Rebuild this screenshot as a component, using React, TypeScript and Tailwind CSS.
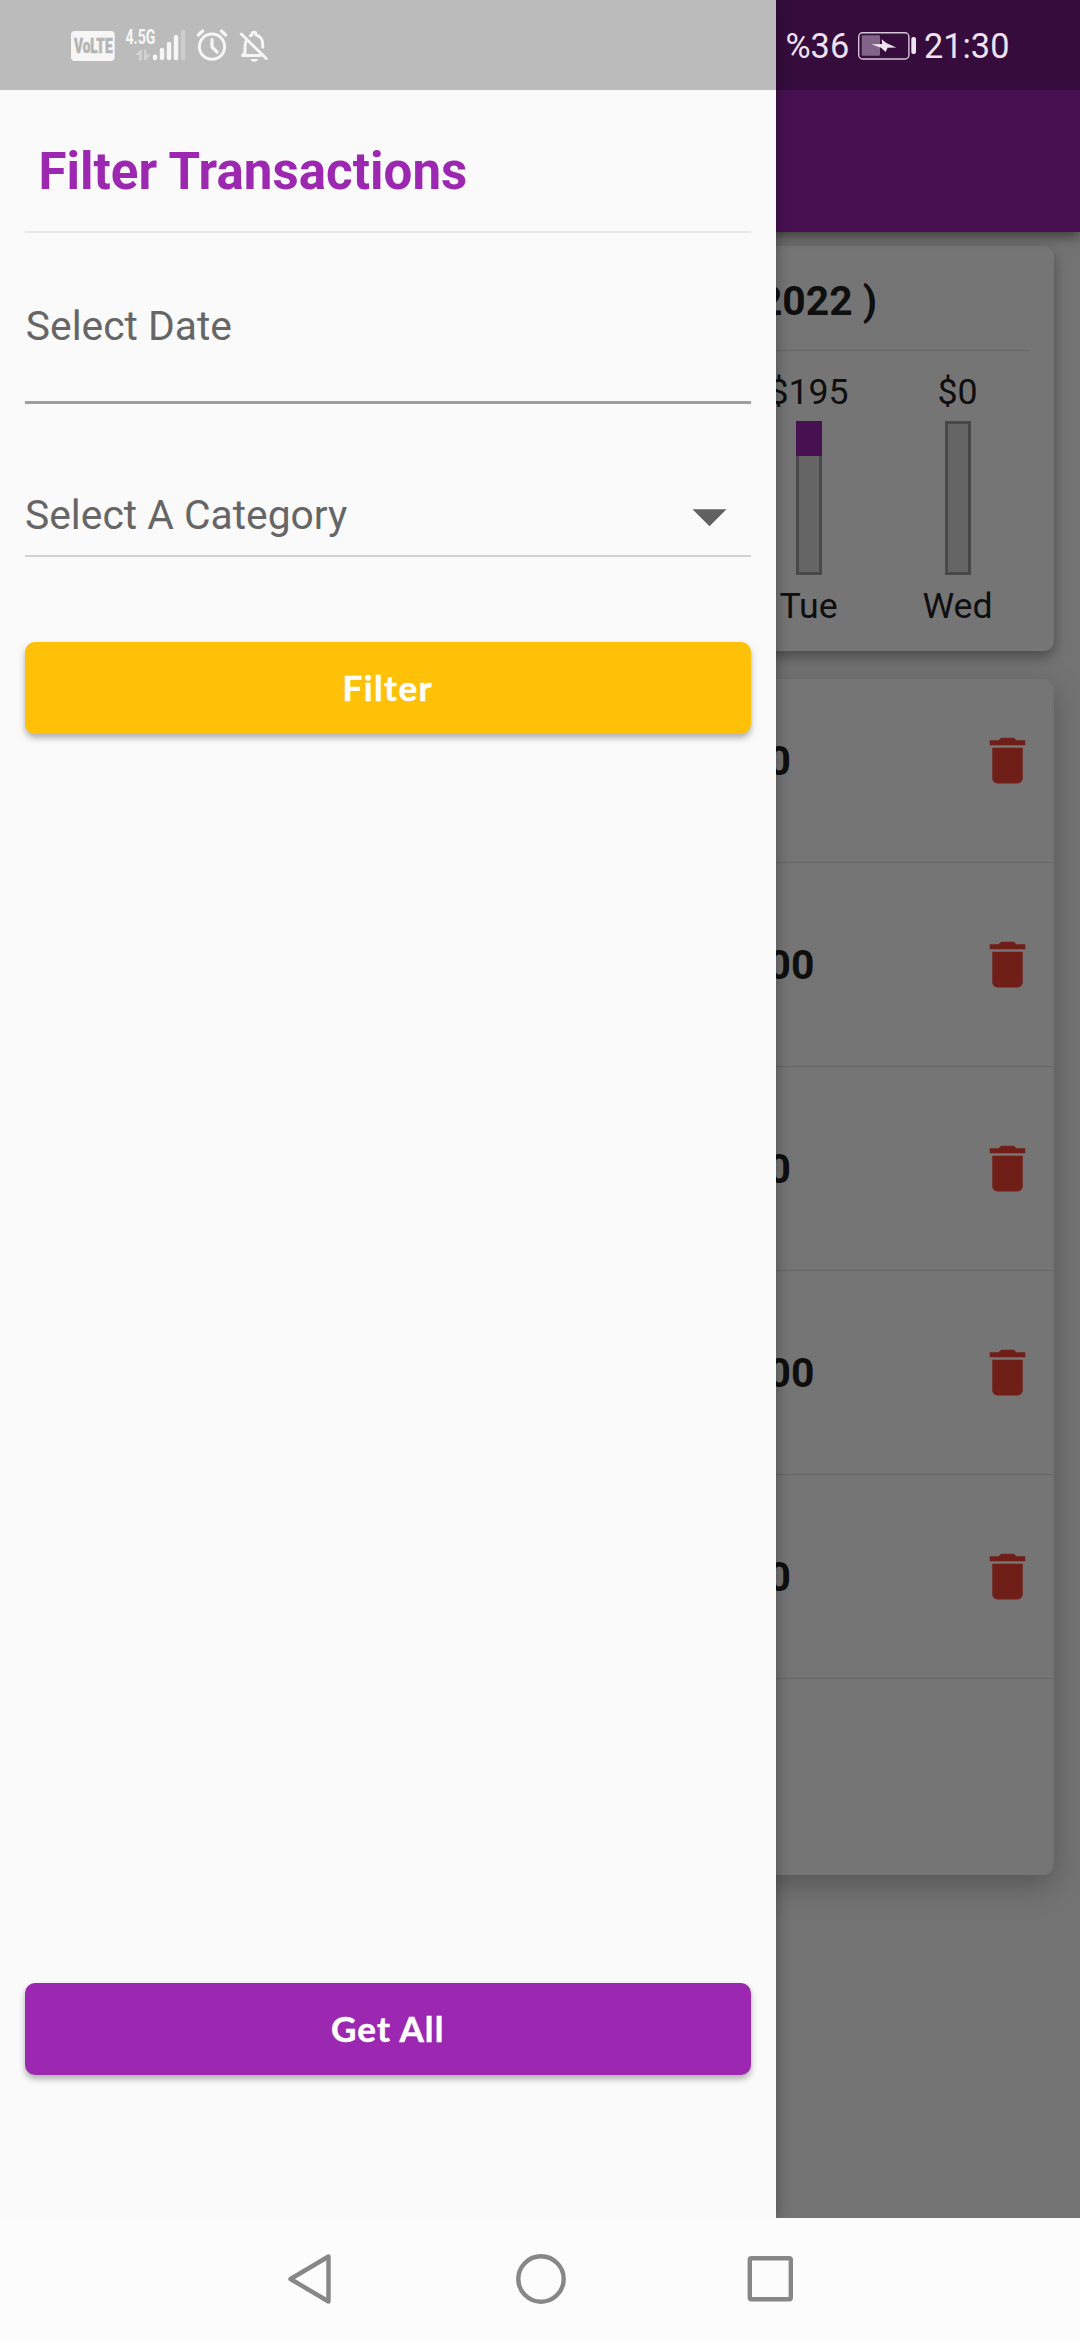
const days = [
  { label: "Tue", amount: "$195", ratio: 0.23 },
  { label: "Wed", amount: "$0", ratio: 0 },
];

const transactions = ["0", "00", "0", "00", "0"];

function TrashIcon() {
  return (
    <svg viewBox="0 0 24 24" className="size-[61px] shrink-0 fill-[#f44336]">
      <path d="M6 19c0 1.1.9 2 2 2h8c1.1 0 2-.9 2-2V7H6v12zM19 4h-3.5l-1-1h-5l-1 1H5v2h14V4z" />
    </svg>
  );
}

function StatusIcons() {
  return (
    <svg viewBox="71 25 170 42" className="h-[42px] w-[170px]" fill="none">
      <rect x="71" y="31" width="43.7" height="30" rx="4" fill="#f6f6f6" />
      <text x="74" y="52.6" textLength="38.500" lengthAdjust="spacingAndGlyphs" fontFamily="Roboto, sans-serif" fontWeight="900" fontSize="20" fill="#b4b4b4" stroke="#b4b4b4" strokeWidth="0.500">VoLTE</text>
      <text x="125.5" y="43.5" textLength="30" lengthAdjust="spacingAndGlyphs" fontFamily="Roboto, sans-serif" fontWeight="700" fontSize="19.5" fill="#f6f6f6">4.5G</text>
      <g stroke="#f6f6f6" strokeWidth="4.4" strokeLinecap="round">
        <path d="M155 56.7v1.4M162 50v8.1M169 44v14.1M176 37.2v20.9" />
        <path d="M183.200 32v26.100" stroke="#cdcdcd" />
      </g>
      <path d="M135.500 55l5-5.200h1.500v10.400h-3v-5.200zM150.500 54.500l-4.500 5.700h-2v-10.400h2.500v4.700z" fill="#d2d2d2" />
      <g stroke="#f6f6f6" strokeLinecap="round" strokeLinejoin="round">
        <circle cx="212" cy="46.700" r="12.600" strokeWidth="3" />
        <path d="M212 39.500v7.500l5 5" strokeWidth="3.200" />
        <path d="M198.300 35l4.400-4M221.300 31l4.400 4" strokeWidth="3.200" />
      </g>
    </svg>
  );
}

function BellOffIcon() {
  return (
    <svg viewBox="238 27 32 36" className="h-[36px] w-[32px]" fill="none" stroke="#f6f6f6" strokeWidth="2.900" strokeLinecap="round" strokeLinejoin="round">
      <path d="M246 40.500c-.8 2-1 3.500-1 5.500v5.500l-2.300 3h18" />
      <path d="M250.300 34.700c.6-.4 1-.6 1.700-.9 0-3.600 4-3.600 4 0 4.600 1.400 6.700 5 6.700 9.200v3.200" />
      <path d="M241.300 33l25 24.500" />
      <path d="M250.800 58h7a3.500 2.700 0 0 1-7 0z" fill="#f6f6f6" stroke="none" />
    </svg>
  );
}

function BatteryIcon() {
  return (
    <svg viewBox="857 31 60 30" className="h-[30px] w-[60px] shrink-0" fill="none">
      <rect x="858.700" y="32.700" width="50.200" height="26.300" rx="4" stroke="#d5c6d8" strokeWidth="1.400" />
      <rect x="861.700" y="35.300" width="18.300" height="20.500" rx="1" fill="#816487" />
      <path d="M871.300 44.300l10.900-.3-.6-4.700 4.700 3.600 10 4.600-8.700.3-2 4.200-4.600-4.200z" fill="#efe3f1" />
      <rect x="911.300" y="37" width="4.700" height="17" rx="2" fill="#efe3f1" />
    </svg>
  );
}

function StatusBar() {
  return (
    <div className="absolute inset-x-0 top-0 flex h-[90px] items-center bg-black/25 pt-[2px]">
      <div className="ml-[71px] flex w-[714.500px] items-center">
        <StatusIcons />
        <div className="-ml-[3px]"><BellOffIcon /></div>
      </div>
      <div className="flex items-center text-[34.300px] leading-none text-[#efe3f1]">
        <span className="w-[71.500px] pt-px">%36</span>
        <BatteryIcon />
        <span className="ml-[7px] pt-px">21:30</span>
      </div>
    </div>
  );
}

function DayColumn({ label, amount, ratio }: { label: string; amount: string; ratio: number }) {
  return (
    <div className="flex w-[149px] flex-col items-center text-[35.700px] leading-[42px] text-[#212121]">
      <span>{amount}</span>
      <div className="mt-[8px] h-[154px] w-[26px] border-[3px] border-[#9e9e9e] bg-[#dcdcdc]">
        {ratio > 0 && <div className="-mx-[3px] -mt-[3px] bg-[#9c27b0]" style={{ height: 154 * ratio }} />}
      </div>
      <span className="mt-[10px]">{label}</span>
    </div>
  );
}

function Backdrop() {
  return (
    <div className="flex h-full flex-col bg-[#fafafa]">
      <div className="relative h-[232px] shrink-0 bg-[#9c27b0] shadow-[0_5px_12px_rgba(0,0,0,0.45)]" />
      <section className="mx-[26px] mt-[14px] h-[405px] shrink-0 rounded-[10px] bg-white px-[25px] shadow-[0_6px_14px_rgba(0,0,0,0.35)]">
        <div className="flex h-[105px] items-center justify-end border-b border-[#dfdfdf] pt-[6px] pr-[152px] text-[40.800px] font-bold leading-none text-[#212121]">
          2022 )
        </div>
        <div className="-mr-[3px] flex justify-end pt-[20px]">
          {days.map((d) => <DayColumn key={d.label} {...d} />)}
        </div>
      </section>
      <section className="mx-[26px] mt-[28px] h-[1196px] shrink-0 overflow-hidden rounded-[11px] border-r-2 border-[#f8f8f8] bg-white shadow-[0_10px_30px_rgba(0,0,0,0.25)]">
        {transactions.map((amount, i) => (
          <div key={i} className="flex h-[204px] items-center justify-between border-b border-[#dfdfdf] pr-[14px] pl-[741.500px] first:h-[184px] first:pb-[20px]">
            <span className="pt-px text-[40.800px] font-bold leading-none text-[#212121]">{amount}</span>
            <TrashIcon />
          </div>
        ))}
      </section>
    </div>
  );
}

function Drawer() {
  return (
    <aside className="absolute inset-y-0 left-0 flex w-[775.500px] flex-col bg-[#fafafa] px-[25px] pt-[90px] shadow-[0_0_14px_rgba(0,0,0,0.35)]">
      <h1 className="flex h-[143px] items-center border-b-2 border-[#e8e8e8] pt-[21px] pl-[13.400px] text-[51px] font-bold leading-none tracking-[0.060px] text-[#9c27b0]">Filter Transactions</h1>
      <div className="flex h-[171px] items-center border-b-[3px] border-[#9e9e9e] pt-[18px] pl-[0.800px] text-[40.800px] leading-none text-[#666666]">Select Date</div>
      <div className="flex h-[153px] items-center justify-between border-b-2 border-[#d2d2d2] pt-[71px] pr-[10.500px] text-[40.800px] leading-none text-[#666666]">
        <span>Select A Category</span>
        <svg viewBox="0 0 24 24" className="size-[61px] fill-[#616161]"><path d="M5.300 9.500l6.700 6.700 6.700-6.700z" /></svg>
      </div>
      <button className="mt-[85px] h-[92px] rounded-[10px] bg-[#ffc107] pb-[2px] font-[Lato,sans-serif] text-[35px] font-bold tracking-[1.400px] text-white shadow-[0_4px_6px_rgba(0,0,0,0.3)] [-webkit-text-stroke:0.5px_white]">Filter</button>
      <button className="mt-auto mb-[143px] h-[92px] rounded-[10px] bg-[#9c27b0] pb-[2px] font-[Lato,sans-serif] text-[35px] font-bold tracking-[1.100px] text-white shadow-[0_4px_6px_rgba(0,0,0,0.3)] [-webkit-text-stroke:0.5px_white]">Get All</button>
    </aside>
  );
}

function NavBar() {
  return (
    <nav className="flex h-[122px] shrink-0 items-center justify-center bg-[#fcfcfc]">
      <svg viewBox="287 2254 505 50" className="h-[50px] w-[505px]" fill="none" stroke="#878787" strokeWidth="4.400" strokeLinejoin="round">
        <path d="M289.500 2279l38-22.500v45z" />
        <circle cx="540" cy="2279" r="22.700" />
        <rect x="748.800" y="2258.200" width="41" height="41" rx="1.500" />
      </svg>
    </nav>
  );
}

export default function App() {
  return (
    <div className="flex h-[2340px] w-[1080px] flex-col overflow-hidden font-[Roboto,sans-serif]">
      <main className="relative h-[2218px] shrink-0 overflow-hidden">
        <Backdrop />
        <div className="absolute inset-0 bg-black/54" />
        <Drawer />
        <StatusBar />
      </main>
      <NavBar />
    </div>
  );
}
